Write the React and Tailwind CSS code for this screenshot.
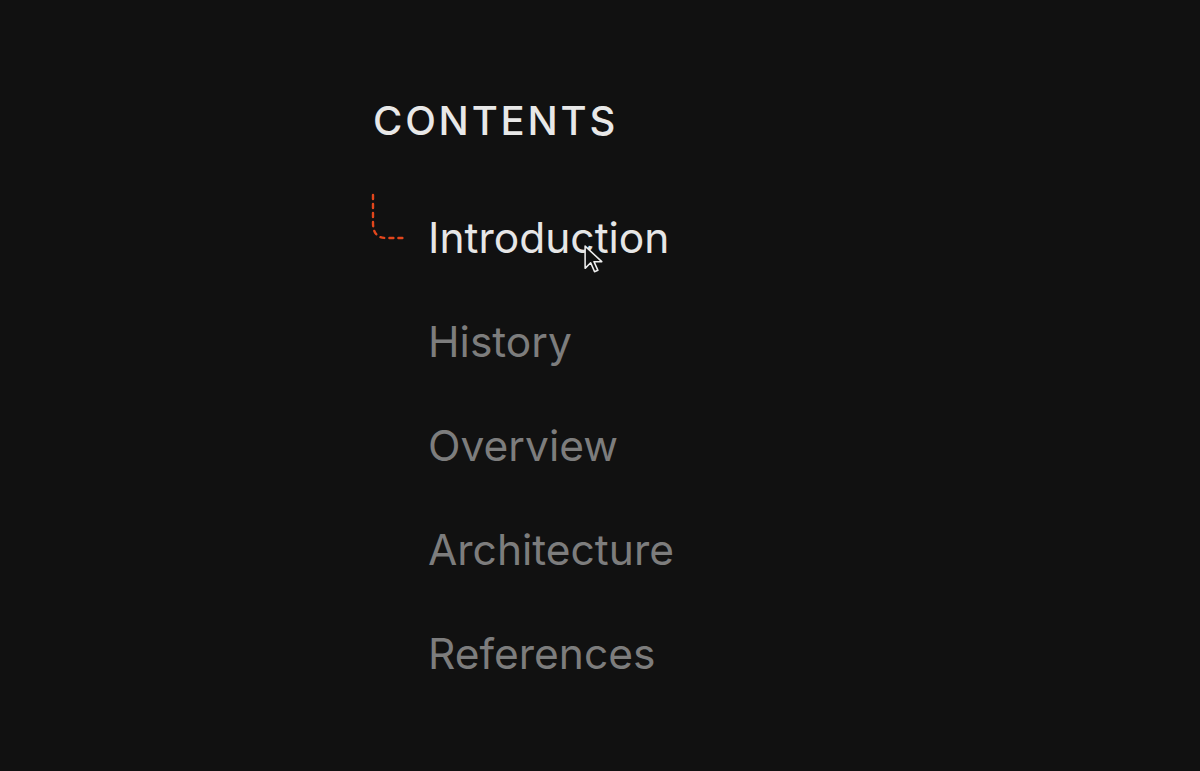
import React from "react";

const items = ["Introduction", "History", "Overview", "Architecture", "References"];

const Connector = () => (
  <svg width="40" height="50" viewBox="0 0 40 50" className="absolute left-[-57px] top-[-21px]">
    <path
      d="M2 2 V30 Q2 45 15 45 H36"
      fill="none"
      stroke="#e2461c"
      strokeWidth="2.4"
      strokeDasharray="4 5"
      strokeLinecap="round"
    />
  </svg>
);

const Cursor = () => (
  <svg width="20" height="30" viewBox="0 0 18 27" className="absolute left-[156px] top-[31px]">
    <path d="M1 1 L1 21 L6 16 L9.5 24 L12.5 22.8 L9 15 L16 15 Z" fill="#111" stroke="#eee" strokeWidth="1.4" strokeLinejoin="round" />
  </svg>
);

export default function App() {
  return (
    <div className="min-h-screen w-full bg-[#111111] font-['Inter',sans-serif]">
      <div className="pl-[373px] pt-[98px]">
        <h2 className="text-[40px] leading-[46px] tracking-[0.07em] text-[#e8e8e8] font-medium">CONTENTS</h2>
        <ul className="mt-[70px] flex flex-col gap-[56px] pl-[55px]">
          {items.map((t, i) => (
            <li
              key={t}
              className={`relative text-[42.5px] leading-[48px] ${i === 0 ? "text-[#e6e6e6]" : "text-[#7d7d7d]"}`}
            >
              {i === 0 && <Connector />}
              {t}
              {i === 0 && <Cursor />}
            </li>
          ))}
        </ul>
      </div>
    </div>
  );
}
